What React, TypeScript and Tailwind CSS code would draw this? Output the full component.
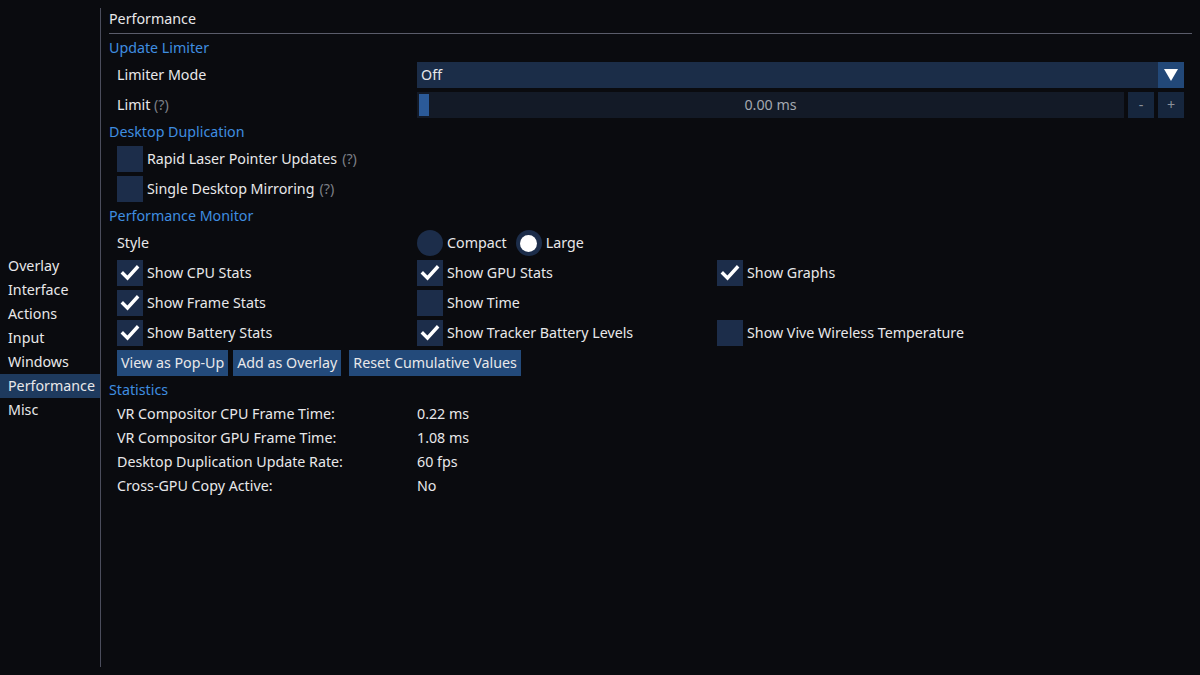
import type { ReactNode } from 'react'

const navItems = ['Overlay', 'Interface', 'Actions', 'Input', 'Windows', 'Performance', 'Misc']

function Check() {
  return (
    <svg viewBox="0 0 26 26" className="w-[26px] h-[26px]">
      <path d="M6 13.5 L10.5 18 L20 7.5" fill="none" stroke="#ffffff" strokeWidth={3.4} strokeLinecap="square" />
    </svg>
  )
}

function Checkbox({ label, checked, help }: { label: string; checked?: boolean; help?: boolean }) {
  return (
    <div className="flex items-center h-[26px]">
      <div className="w-[26px] h-[26px] bg-[#1c2d4a] shrink-0">{checked && <Check />}</div>
      <span className="ml-[4px] whitespace-nowrap">{label}</span>
      {help && <span className="ml-[5px] text-[#7c7f86]">(?)</span>}
    </div>
  )
}

function Radio({ label, selected }: { label: string; selected?: boolean }) {
  return (
    <div className="flex items-center h-[26px]">
      <div className="w-[26px] h-[26px] rounded-full bg-[#1c2d4a] flex items-center justify-center shrink-0">
        {selected && <div className="w-[17px] h-[17px] rounded-full bg-white" />}
      </div>
      <span className="ml-[4px]">{label}</span>
    </div>
  )
}

function Header({ children }: { children: ReactNode }) {
  return <div className="h-5 flex items-center text-[#3f8ee0]">{children}</div>
}

function Row({ children }: { children: ReactNode }) {
  return <div className="pl-2 pr-2 flex items-center h-[26px]">{children}</div>
}

function Grid3({ children }: { children: ReactNode }) {
  return <div className="pl-2 grid grid-cols-[300px_300px_1fr] h-[26px]">{children}</div>
}

function Button({ children }: { children: ReactNode }) {
  return <div className="h-[26px] px-[4px] bg-[#234a7a] flex items-center whitespace-nowrap">{children}</div>
}

function StatRow({ label, value }: { label: string; value: string }) {
  return (
    <div className="pl-2 h-5 flex items-center">
      <span className="w-[300px]">{label}</span>
      <span>{value}</span>
    </div>
  )
}

export default function App() {
  return (
    <div
      className="w-[1200px] h-[675px] bg-[#0a0b0f] text-[#e8e8ea] text-[14.25px] flex overflow-hidden"
      style={{ fontFamily: '"Noto Sans", "Open Sans", sans-serif' }}
    >
      <div className="w-[100px] flex flex-col justify-center">
        {navItems.map((item) => (
          <div
            key={item}
            className={`h-6 pl-2 flex items-center ${item === 'Performance' ? 'bg-[#1e3a5e]' : ''}`}
          >
            {item}
          </div>
        ))}
      </div>
      <div className="my-2 w-px bg-[#4b4d5c]" />
      <div className="flex-1 pl-2 pr-2 pt-[9px] flex flex-col gap-1">
        <div className="h-5 flex items-center">Performance</div>
        <div className="h-px bg-[#5a5c6a]" />
        <Header>Update Limiter</Header>
        <Row>
          <span className="w-[300px]">Limiter Mode</span>
          <div className="flex-1 h-[26px] flex bg-[#1b2d48]">
            <span className="flex-1 pl-[4px] flex items-center">Off</span>
            <div className="w-[26px] h-[26px] bg-[#224878] flex items-center justify-center">
              <svg viewBox="0 0 14 12" className="w-[14px] h-[12px]">
                <path d="M0 0 H14 L7 12 Z" fill="#ffffff" />
              </svg>
            </div>
          </div>
        </Row>
        <Row>
          <span className="w-[300px]">
            Limit <span className="text-[#7c7f86]">(?)</span>
          </span>
          <div className="flex-1 h-[26px] flex gap-[4px]">
            <div className="flex-1 relative bg-[#131a27] flex items-center justify-center text-[#a4a8b0]">
              <div className="absolute left-[2px] top-[2px] bottom-[2px] w-[10px] bg-[#2b5a98]" />
              0.00 ms
            </div>
            <div className="w-[26px] bg-[#16263d] flex items-center justify-center text-[#8a909a]">-</div>
            <div className="w-[26px] bg-[#16263d] flex items-center justify-center text-[#8a909a]">+</div>
          </div>
        </Row>
        <Header>Desktop Duplication</Header>
        <Row>
          <Checkbox label="Rapid Laser Pointer Updates" help />
        </Row>
        <Row>
          <Checkbox label="Single Desktop Mirroring" help />
        </Row>
        <Header>Performance Monitor</Header>
        <Row>
          <span className="w-[300px]">Style</span>
          <Radio label="Compact" />
          <div className="ml-[9px]">
            <Radio label="Large" selected />
          </div>
        </Row>
        <Grid3>
          <Checkbox label="Show CPU Stats" checked />
          <Checkbox label="Show GPU Stats" checked />
          <Checkbox label="Show Graphs" checked />
        </Grid3>
        <Grid3>
          <Checkbox label="Show Frame Stats" checked />
          <Checkbox label="Show Time" />
          <div />
        </Grid3>
        <Grid3>
          <Checkbox label="Show Battery Stats" checked />
          <Checkbox label="Show Tracker Battery Levels" checked />
          <Checkbox label="Show Vive Wireless Temperature" />
        </Grid3>
        <div className="pl-2 flex gap-[5px] h-[26px]">
          <Button>View as Pop-Up</Button>
          <Button>Add as Overlay</Button>
          <div className="ml-[3px]">
            <Button>Reset Cumulative Values</Button>
          </div>
        </div>
        <Header>Statistics</Header>
        <StatRow label="VR Compositor CPU Frame Time:" value="0.22 ms" />
        <StatRow label="VR Compositor GPU Frame Time:" value="1.08 ms" />
        <StatRow label="Desktop Duplication Update Rate:" value="60 fps" />
        <StatRow label="Cross-GPU Copy Active:" value="No" />
      </div>
    </div>
  )
}
